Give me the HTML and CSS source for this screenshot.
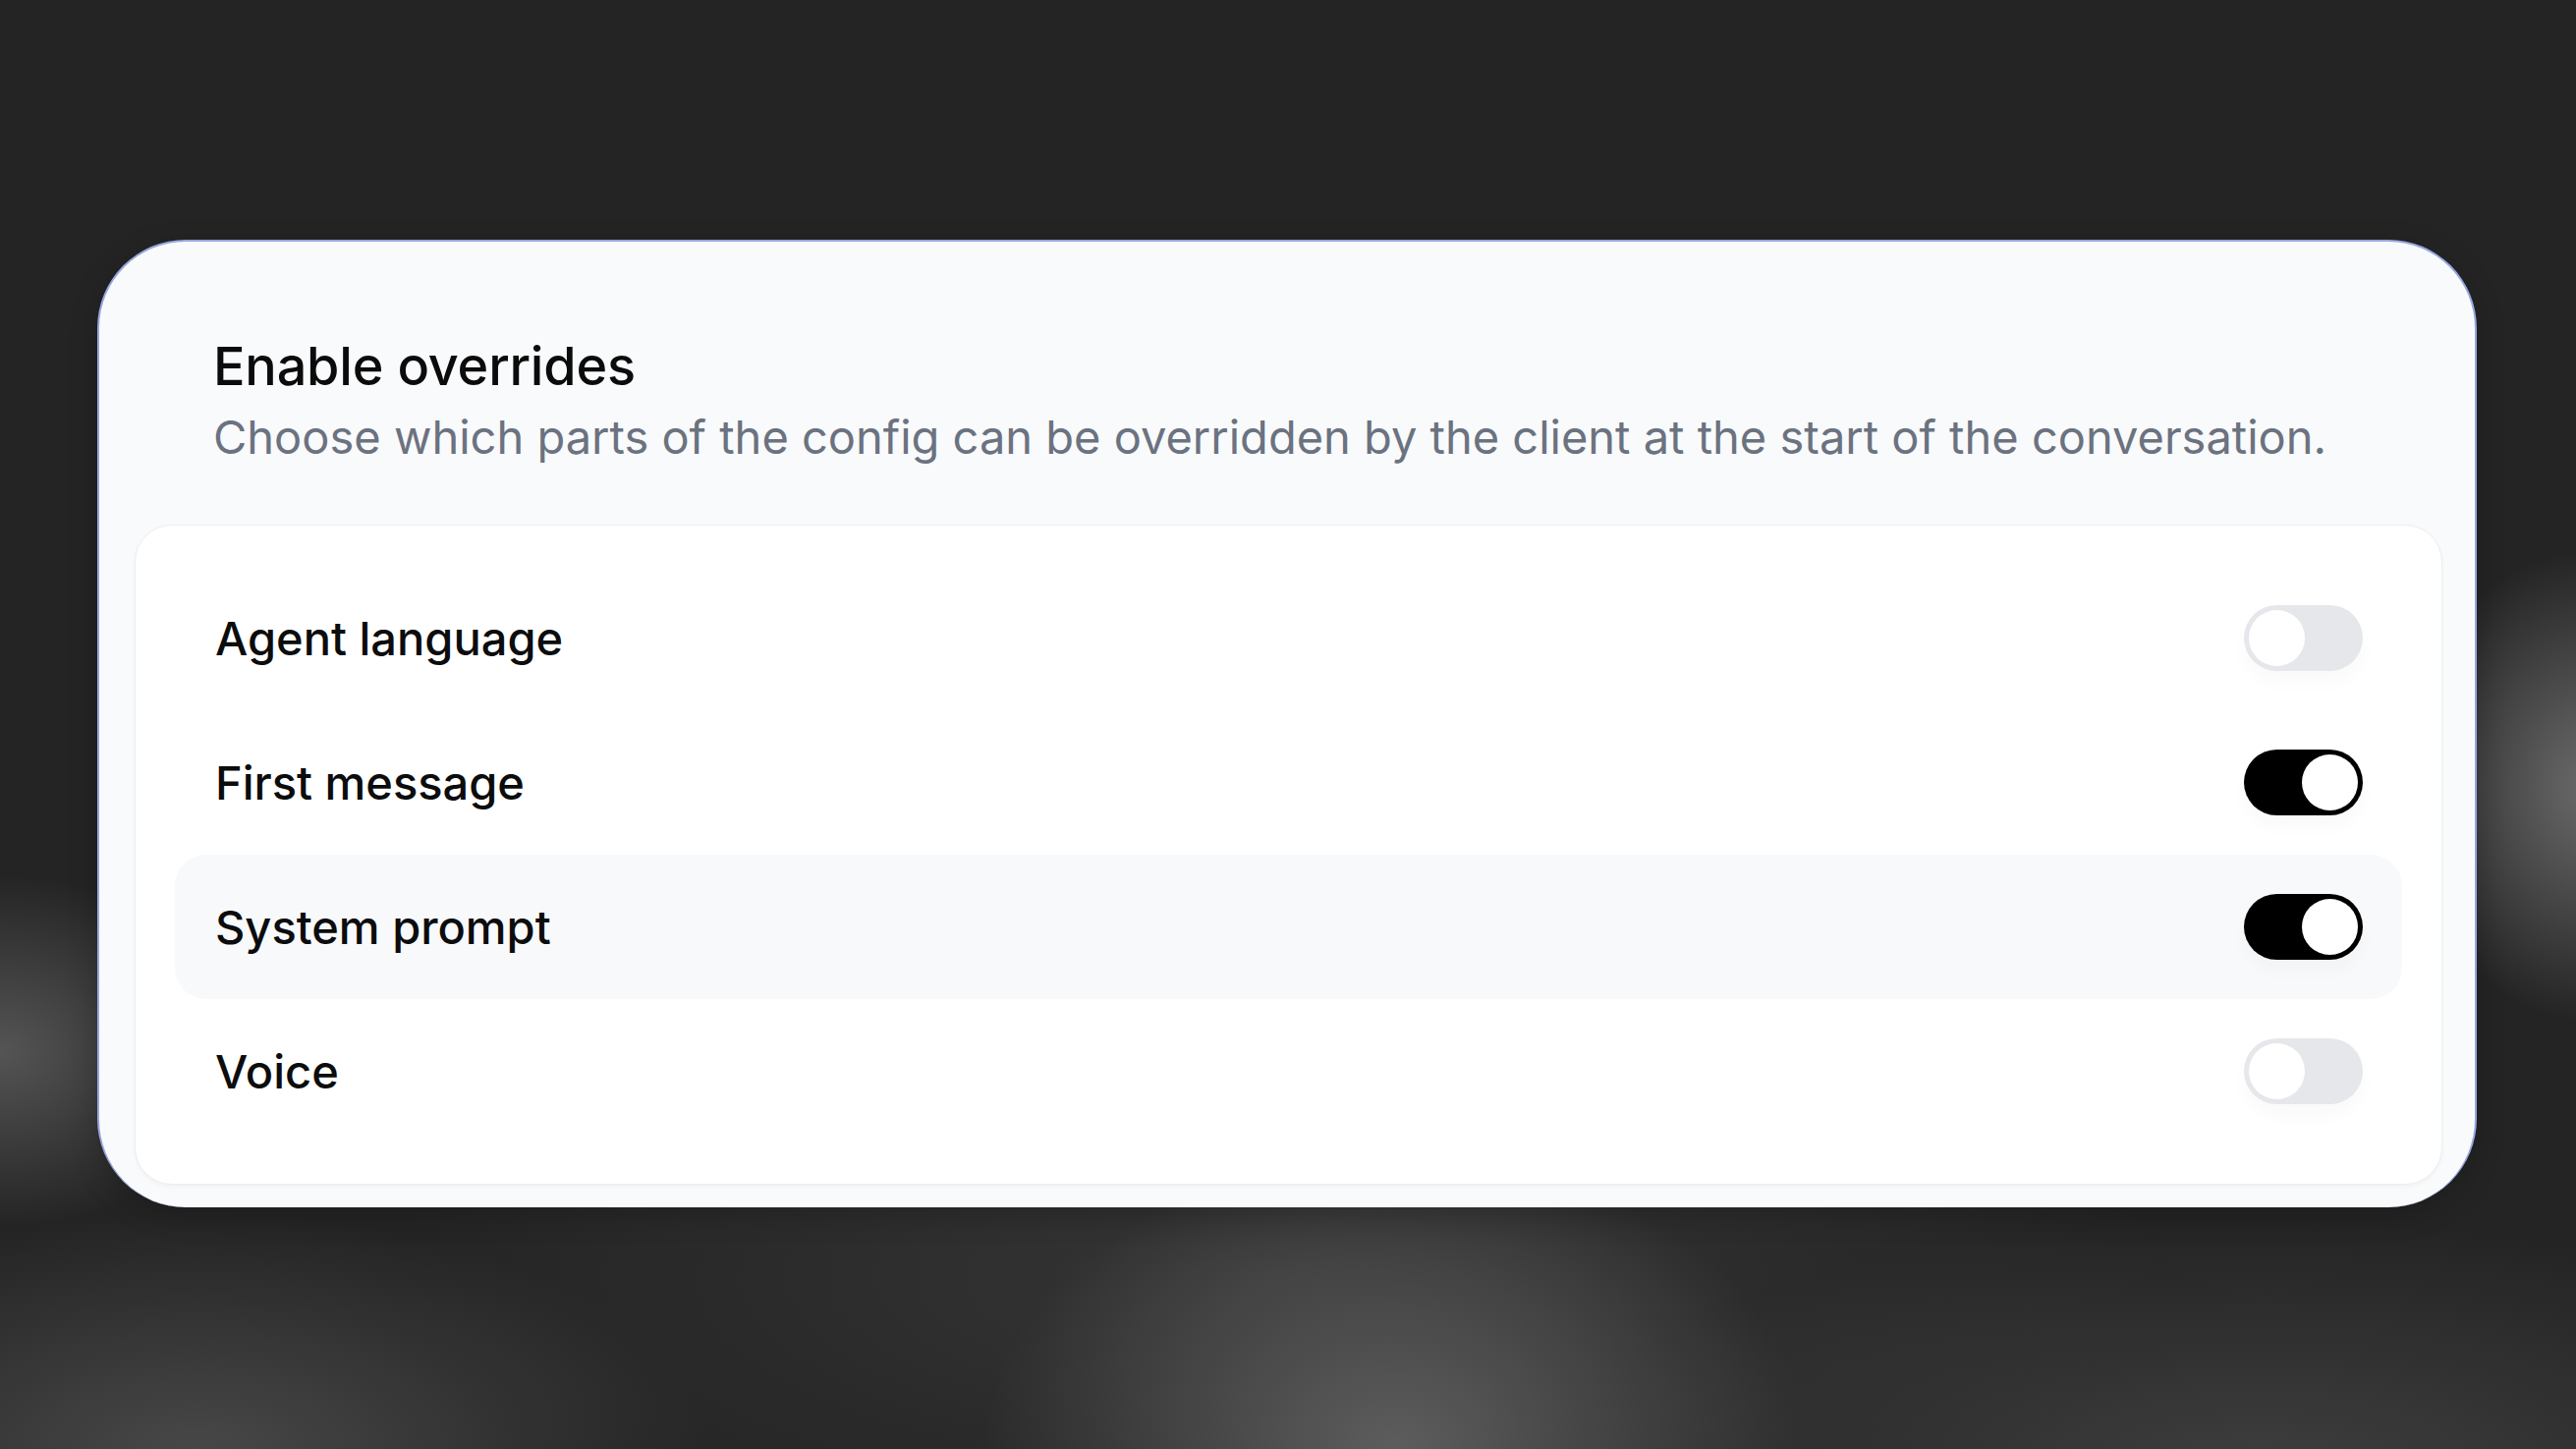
FILE: index.html
```html
<!DOCTYPE html>
<html lang="en">
<head>
<meta charset="utf-8">
<title>Enable overrides</title>
<link rel="stylesheet" href="styles.css">
</head>
<body>
<div class="stage">
  <section class="panel">
    <header class="panel-head">
      <h2 class="panel-title">Enable overrides</h2>
      <p class="panel-desc">Choose which parts of the config can be overridden by the client at the start of the conversation.</p>
    </header>
    <div class="list">
      <div class="row">
        <span class="label">Agent language</span>
        <span class="switch"><span class="knob"></span></span>
      </div>
      <div class="row">
        <span class="label">First message</span>
        <span class="switch on"><span class="knob"></span></span>
      </div>
      <div class="row hover">
        <span class="label">System prompt</span>
        <span class="switch on"><span class="knob"></span></span>
      </div>
      <div class="row">
        <span class="label">Voice</span>
        <span class="switch"><span class="knob"></span></span>
      </div>
    </div>
  </section>
</div>
</body>
</html>
```

FILE: styles.css
```css
* { box-sizing: border-box; }
html, body { margin: 0; padding: 0; }
body {
  width: 2622px;
  height: 1475px;
  overflow: hidden;
  font-family: Inter, "Noto Sans", "Liberation Sans", sans-serif;
  background-color: #242424;
  background-image:
    radial-gradient(ellipse 200px 240px at 2640px 800px, rgba(125,125,125,0.8), rgba(125,125,125,0) 100%),
    radial-gradient(ellipse 240px 180px at 0px 1070px, rgba(105,105,105,0.7), rgba(105,105,105,0) 100%),
    radial-gradient(ellipse 520px 240px at 200px 1475px, rgba(95,95,95,0.6), rgba(95,95,95,0) 100%),
    radial-gradient(ellipse 420px 300px at 1420px 1475px, rgba(110,110,110,0.75), rgba(110,110,110,0) 100%),
    radial-gradient(ellipse 700px 260px at 2300px 1500px, rgba(80,80,80,0.6), rgba(80,80,80,0) 100%),
    radial-gradient(ellipse 900px 300px at 1300px 1300px, rgba(70,70,70,0.5), rgba(70,70,70,0) 100%);
}
.stage {
  padding: 244px 101px 0 99px;
}
.panel {
  background: #f9fafb;
  border: 2px solid #97a6e0;
  border-bottom: 0;
  border-radius: 90px;
  padding: 95px 33px 23px 36px;
  box-shadow: 0 8px 30px rgba(0,0,0,0.2);
}
.panel-head {
  padding: 0 80px;
}
.panel-title {
  margin: 0;
  font-size: 54px;
  line-height: 64px;
  font-weight: 500;
  color: #0b0b0c;
  letter-spacing: -0.2px;
}
.panel-desc {
  margin: 12px 0 0;
  font-size: 47px;
  line-height: 56px;
  font-weight: 400;
  color: #6b7280;
}
.list {
  margin-top: 61px;
  background: #ffffff;
  border: 1px solid #eceef1;
  border-radius: 38px;
  padding: 41px 40px;
  box-shadow: 0 2px 4px rgba(0,0,0,0.04);
}
.row {
  height: 147px;
  display: flex;
  align-items: center;
  justify-content: space-between;
  padding: 0 40px 0 41px;
  border-radius: 32px;
}
.row.hover {
  background: #f8f9fb;
}
.label {
  font-size: 47px;
  font-weight: 500;
  color: #0c0c0d;
}
.switch {
  width: 121px;
  height: 67px;
  border-radius: 34px;
  background: #e5e7eb;
  padding: 5px;
  display: flex;
  align-items: center;
  box-shadow: 0 12px 18px rgba(0,0,0,0.025);
}
.switch .knob {
  width: 57px;
  height: 57px;
  border-radius: 50%;
  background: #ffffff;
}
.switch.on {
  background: #000000;
  justify-content: flex-end;
}
```
